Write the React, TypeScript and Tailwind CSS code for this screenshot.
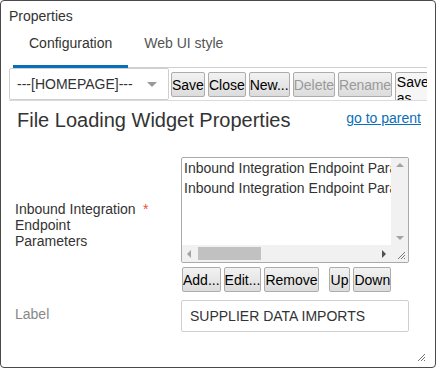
import { ReactNode } from "react";

interface IBtn {
  children: ReactNode;
  disabled?: boolean;
  className?: string;
}

const Btn = ({ children, disabled = false, className }: IBtn) => {
  return (
    <button
      className={
        (className ?? "") +
        ` shrink-0 h-[25px] px-0 border border-[#adadad] rounded-[2px] bg-gradient-to-b from-[#f2f2f2] to-[#dcdcdc] text-[14px] leading-[16px] whitespace-nowrap ${
          disabled ? "text-[#9a9a9a]" : "text-black"
        }`
      }
    >
      {children}
    </button>
  );
};

const Grip = () => (
  <svg width="10" height="10" viewBox="0 0 10 10">
    <path d="M9 2 L2 9 M9 5 L5 9 M9 8 L8 9" stroke="#777" strokeWidth="1" />
  </svg>
);

const App = () => {
  return (
    <div className="w-[436px] h-[369px] bg-white font-['Liberation_Sans',Arial,sans-serif]">
      <div className="relative w-[436px] h-[368px] border border-[#4a4a4a] rounded-[4px] px-[8px] text-[#333]">
        <div className="pt-[7px] text-[14px] leading-[16px]">Properties</div>

        {/* tabs */}
        <div className="ml-[4px] flex border-b border-[#cfcfcf] text-[14px] leading-[16px]">
          <div className="-mb-px px-4 pt-[11px] pb-[14px] border-b-[3px] border-[#0a6fb7] text-[#333]">
            Configuration
          </div>
          <div className="-mb-px px-4 pt-[11px] pb-[14px] text-[#555]">Web UI style</div>
        </div>

        {/* toolbar */}
        <div className="flex items-start gap-[4px] h-[33px] overflow-hidden border-b border-[#dadada]">
          <div className="shrink-0 w-[160px] h-[32px] border border-[#cfcfcf] rounded-[2px] flex items-center justify-between pl-[7px] pr-[11px] text-[14px] text-[#333]">
            <span>---[HOMEPAGE]---</span>
            <span className="w-0 h-0 border-x-[5px] border-x-transparent border-t-[5px] border-t-[#999]" />
          </div>
          <div className="flex gap-[3px] mt-[4px] ml-[-2px]">
            <Btn>Save</Btn>
            <Btn>Close</Btn>
            <Btn>New...</Btn>
            <Btn disabled>Delete</Btn>
            <Btn disabled className="tracking-[-0.2px]">Rename</Btn>
            <button className="w-[40px] h-[34px] shrink-0 border border-[#adadad] rounded-[2px] bg-[#f6f6f6] text-[14px] leading-[16px] text-black text-left pl-px pt-px self-start">
              Save as
            </button>
          </div>
        </div>

        {/* heading */}
        <div className="flex items-start justify-between mt-[7px] pl-[8px] pr-[6px]">
          <div className="text-[20px] leading-[24px] text-[#333]">File Loading Widget Properties</div>
          <a className="mt-[2px] text-[14px] leading-[16px] text-[#0a6fb7] underline">go to parent</a>
        </div>

        {/* row 1 */}
        <div className="flex items-center mt-[25px]">
          <div className="w-[172px] shrink-0 pl-[6px] flex items-start text-[14px] leading-[16px] text-[#333]">
            <span className="w-[126px]">Inbound Integration Endpoint Parameters</span>
            <span className="ml-[2px] text-[#e8503a]">*</span>
          </div>
          <div className="flex flex-col">
            <div className="w-[228px] h-[106px] border border-[#aaa] rounded-[2px] flex flex-col overflow-hidden">
              <div className="flex flex-1">
                <div className="flex-1 overflow-hidden pl-[2px] text-[14px] leading-[20px] text-[#333] whitespace-nowrap">
                  <div>Inbound Integration Endpoint Parameters</div>
                  <div>Inbound Integration Endpoint Parameters</div>
                </div>
                <div className="w-[17px] bg-[#f1f1f1] flex flex-col items-center justify-between py-[5px]">
                  <span className="w-0 h-0 border-x-[4px] border-x-transparent border-b-[4px] border-b-[#a3a3a3]" />
                  <span className="w-0 h-0 border-x-[4px] border-x-transparent border-t-[4px] border-t-[#a3a3a3]" />
                </div>
              </div>
              <div className="flex h-[17px]">
                <div className="flex-1 bg-[#f1f1f1] flex items-center px-[5px]">
                  <span className="w-0 h-0 border-y-[4px] border-y-transparent border-r-[4px] border-r-[#a3a3a3]" />
                  <span className="ml-[7px] w-[63px] h-[13px] bg-[#c1c1c1]" />
                  <span className="flex-1" />
                  <span className="w-0 h-0 border-y-[4px] border-y-transparent border-l-[4px] border-l-[#505050]" />
                </div>
                <div className="w-[17px] bg-[#f1f1f1] flex items-end justify-end p-[2px]">
                  <Grip />
                </div>
              </div>
            </div>
            <div className="flex mt-[4px] ml-px">
              <Btn>Add...</Btn>
              <Btn className="ml-[3px]">Edit...</Btn>
              <Btn className="ml-[3px]">Remove</Btn>
              <Btn className="ml-[10px] px-px">Up</Btn>
              <Btn className="ml-[3px]">Down</Btn>
            </div>
          </div>
        </div>

        {/* row 2 */}
        <div className="flex items-start mt-[8px]">
          <div className="w-[172px] shrink-0 pl-[6px] pt-[6px] text-[14px] leading-[16px] text-[#888]">Label</div>
          <div className="w-[228px] h-[32px] border border-[#cfcfcf] rounded-[2px] flex items-center pl-[8px] text-[14px] text-[#333]">
            SUPPLIER DATA IMPORTS
          </div>
        </div>

        <div className="absolute right-[9px] bottom-[5px]">
          <Grip />
        </div>
      </div>
    </div>
  );
};

export default App;
